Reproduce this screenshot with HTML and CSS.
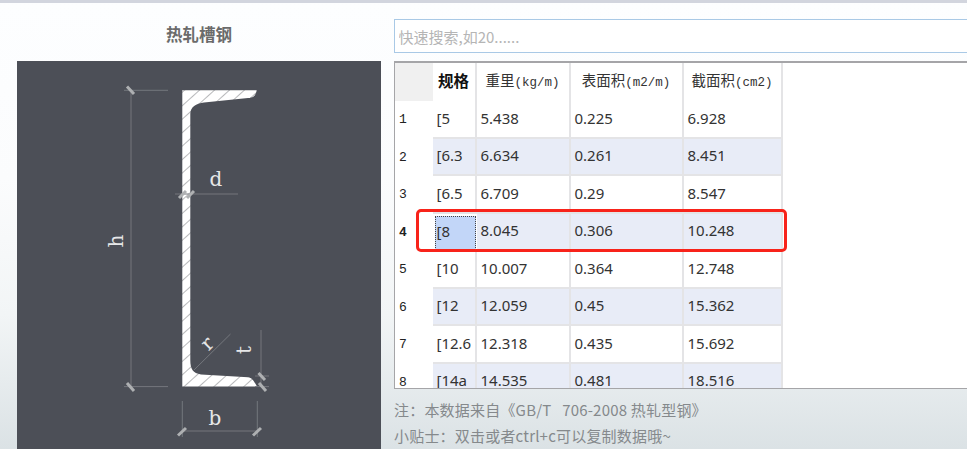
FILE: index.html
```html
<!DOCTYPE html>
<html lang="zh-CN">
<head>
<meta charset="utf-8">
<title>热轧槽钢</title>
<link rel="stylesheet" href="styles.css">
</head>
<body>
<div class="topbar"></div>
<main class="main">
  <section class="left">
    <h1 class="title">热轧槽钢</h1>
    <div class="diagram">
      <svg class="drawing" viewBox="17 61 364 388" width="364" height="388" aria-label="槽钢截面图">
        <defs>
          <pattern id="hatch" width="10" height="10" patternUnits="userSpaceOnUse" patternTransform="rotate(-42)">
            <rect width="10" height="10" fill="#fff"/>
            <line x1="0" y1="0" x2="10" y2="0" stroke="#b0b1b4" stroke-width="1.8"/>
          </pattern>
        </defs>
        <path class="profile" d="M182.3 90.3H256.7C256 95 254 97.6 248 98L204 102.4C196 103.4 190.3 107 190.3 114V360C190.3 369 193 373.4 201 374.4L248 377.2C252 377.6 254 381 257 386.6H182.3Z"/>
        <g class="dim">
          <path d="M131 90V387M124 90.3H168M124 386.6H168"/>
          <path d="M175 194H238"/>
          <path d="M194 370L230.500 334"/>
          <path d="M261 330V385M255 376H269M255 386.600H269"/>
          <path d="M182.300 401V437M257.300 401V437M182 431H257"/>
        </g>
        <g class="tick">
          <path d="M127 86.500L134 94M127 383L134 391"/>
          <path d="M179 198L186 191M187 198L194 191"/>
          <path d="M258.500 373L265 380M259 383L266 391"/>
          <path d="M178 435.500L186 428M253 435.500L261 428"/>
        </g>
        <text class="label" x="216" y="186" text-anchor="middle">d</text>
        <text class="label" x="215" y="425" text-anchor="middle">b</text>
        <text class="label" transform="translate(123 241) rotate(-90)" text-anchor="middle">h</text>
        <text class="label" transform="translate(212 348) rotate(-45)" text-anchor="middle">r</text>
        <text class="label" transform="translate(251 350) rotate(-90)" text-anchor="middle">t</text>
      </svg>
    </div>
  </section>
  <section class="right">
    <div class="search"><input class="search-input" type="text" placeholder="快速搜索,如20......"></div>
    <div class="grid">
      <div class="row head">
        <div class="cell corner"></div>
        <div class="cell hcell strong"><span class="htext">规格</span></div>
        <div class="cell hcell"><span class="htext">重里<span class="unit">(kg/m)</span></span></div>
        <div class="cell hcell"><span class="htext">表面积<span class="unit">(m2/m)</span></span></div>
        <div class="cell hcell"><span class="htext">截面积<span class="unit">(cm2)</span></span></div>
      </div>
      <div class="row"><div class="cell rowno">1</div><div class="cell spec">[5</div><div class="cell">5.438</div><div class="cell">0.225</div><div class="cell">6.928</div></div>
      <div class="row alt"><div class="cell rowno">2</div><div class="cell spec">[6.3</div><div class="cell">6.634</div><div class="cell">0.261</div><div class="cell">8.451</div></div>
      <div class="row"><div class="cell rowno">3</div><div class="cell spec">[6.5</div><div class="cell">6.709</div><div class="cell">0.29</div><div class="cell">8.547</div></div>
      <div class="row alt"><div class="cell rowno active">4</div><div class="cell spec selected">[8</div><div class="cell">8.045</div><div class="cell">0.306</div><div class="cell">10.248</div></div>
      <div class="row"><div class="cell rowno">5</div><div class="cell spec">[10</div><div class="cell">10.007</div><div class="cell">0.364</div><div class="cell">12.748</div></div>
      <div class="row alt"><div class="cell rowno">6</div><div class="cell spec">[12</div><div class="cell">12.059</div><div class="cell">0.45</div><div class="cell">15.362</div></div>
      <div class="row"><div class="cell rowno">7</div><div class="cell spec">[12.6</div><div class="cell">12.318</div><div class="cell">0.435</div><div class="cell">15.692</div></div>
      <div class="row alt"><div class="cell rowno">8</div><div class="cell spec">[14a</div><div class="cell">14.535</div><div class="cell">0.481</div><div class="cell">18.516</div></div>
      <div class="mark"></div>
    </div>
    <div class="notes">
      <p class="note">注&#xFF1A;本数据来自《GB/T&nbsp;&nbsp; 706-2008 热轧型钢》</p>
      <p class="note">小贴士&#xFF1A;双击或者ctrl+c可以复制数据哦~</p>
    </div>
  </section>
</main>
</body>
</html>
```
FILE: styles.css
```css
* { box-sizing: border-box; }
html, body { margin: 0; height: 449px; overflow: hidden; }
body {
  width: 967px;
  font-family: "Noto Sans", "Noto Sans CJK SC", sans-serif;
  background: linear-gradient(#fdfeff 0, #fbfcfd 40%, #f2f5f6 70%, #dbe2e5 100%);
  color: #333;
}
.topbar {
  height: 3px;
  background: #d2d5de;
}
.main {
  display: flex;
  height: 446px;
  padding-left: 17px;
}
.left {
  width: 364px;
  display: flex;
  flex-direction: column;
}
.title {
  margin: 0;
  height: 58px;
  padding-top: 20px;
  text-align: center;
  font-size: 16.500px;
  line-height: 24px;
  font-weight: 700;
  color: #6b6b6b;
}
.diagram {
  flex: 1;
  background: #4c4f57;
  overflow: hidden;
}
.drawing { display: block; }
.profile { fill: url(#hatch); }
.dim path { fill: none; stroke: #74777d; stroke-width: 1; }
.tick path { fill: none; stroke: #aeb0b2; stroke-width: 3; }
.label {
  font-family: "DejaVu Serif", serif;
  font-size: 20px;
  fill: #e6e7e8;
}
.right {
  margin-left: 13px;
  flex: 1;
  min-width: 0;
  display: flex;
  flex-direction: column;
}
.search {
  padding-top: 16px;
  height: 58px;
}
.search-input {
  display: block;
  width: 100%;
  height: 34px;
  padding: 0 3.500px;
  border: 1.5px solid #a9c9e6;
  border-right: 0;
  background: #fff;
  outline: 0;
  font-family: "Noto Sans CJK SC", sans-serif;
  font-size: 15px;
}
.search-input::placeholder { color: #b5b5b5; opacity: 1; }
.grid {
  position: relative;
  height: 328px;
  border: 1px solid #a5a5a8;
  border-top-width: 2px;
  border-right: 0;
  overflow: hidden;
  background: #fff;
}
.row {
  display: grid;
  grid-template-columns: 38px 44px 94px 113px 99px;
  height: 37.5px;
  font-size: 15px;
  color: #333;
}
.cell {
  display: flex;
  align-items: center;
  padding: 0 0 2px 3.500px;
  white-space: nowrap;
  border-right: 2px solid #e4e4e6;
  border-bottom: 2px solid #e4e4e6;
  min-width: 0;
  overflow: hidden;
}
.alt .cell { background: #e8ecf7; }
.cell.rowno, .alt .cell.rowno {
  background: #fff;
  border: 0;
  padding: 0 0 0 4px;
  font-family: "Liberation Mono", monospace;
  font-size: 13px;
  color: #222;
}
.cell.rowno.active { font-weight: 700; }
.alt .cell.selected {
  background: #c2d6f8;
  border: 1px dotted #444;
  margin: 2px 1px 1px 2px;
  padding: 0 0 4px 0.500px;
}
.head { height: 38px; }
.cell.corner { background: #f0f0f0; border: 0; }
.cell.hcell {
  justify-content: center;
  padding: 0 0 5px;
  font-family: "Noto Sans CJK SC", sans-serif;
  font-size: 14.500px;
  color: #333;
  border-bottom: 0;
}
.cell.strong { font-size: 15.500px; font-weight: 700; color: #111; }
.htext { margin-left: -1px; }
.unit {
  font-family: "Liberation Mono", monospace;
  font-size: 12.500px;
}
.mark {
  position: absolute;
  left: 21px;
  top: 146px;
  width: 371px;
  height: 43px;
  border: 3.500px solid #f8231a;
  border-radius: 5px;
}
.notes { padding-top: 8px; }
.note {
  margin: 0;
  height: 26px;
  font-family: "Noto Sans CJK SC", sans-serif;
  font-size: 15px;
  line-height: 26px;
  letter-spacing: 0.2px;
  color: #85898c;
  white-space: nowrap;
}
```
